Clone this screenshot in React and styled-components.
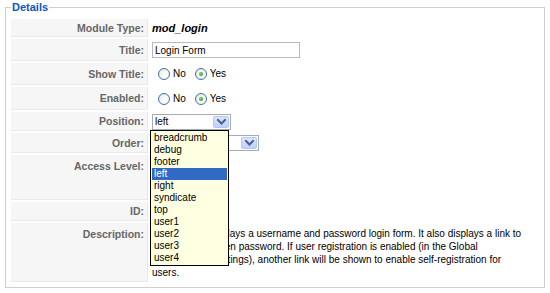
import React from 'react';
import styled, { createGlobalStyle } from 'styled-components';

const Global = createGlobalStyle`
  html, body { margin: 0; padding: 0; background: #fff; }
  body { font-family: "Liberation Sans", Arial, sans-serif; font-size: 10px; color: #000; }
`;

const Fieldset = styled.fieldset`
  margin: 0 5px;
  padding: 5px 5px 5px 5px;
  border: 1px solid #cfcfcf;
  min-width: 0;
`;

const Legend = styled.legend`
  padding: 0 1px;
  font: bold 11px/14px "Liberation Sans", Arial, sans-serif;
  color: #0b55c4;
`;

const Rows = styled.div`
  display: flex;
  flex-direction: column;
  gap: 2px;
`;

const Row = styled.div`
  display: grid;
  grid-template-columns: 137px 1fr;
  column-gap: 2px;
  height: ${p => p.$h}px;
`;

const Key = styled.div`
  box-sizing: border-box;
  background: #f6f6f6;
  border-bottom: 1px solid #e9e9e9;
  border-right: 1px solid #e9e9e9;
  color: #666;
  font: bold 10.5px/12px "Liberation Sans", Arial, sans-serif;
  display: flex;
  justify-content: flex-end;
  align-items: ${p => (p.$top ? 'flex-start' : 'center')};
  padding: ${p => (p.$top ? '5px' : '0')} 3px 0 0;
`;

const Value = styled.div`
  position: relative;
  display: flex;
  align-items: ${p => (p.$top ? 'flex-start' : 'center')};
  padding-left: 2px;
  min-width: 0;
`;

const ModType = styled.span`
  font: italic bold 11px/13px "Liberation Sans", Arial, sans-serif;
  color: #000;
`;

const TextInput = styled.input`
  box-sizing: border-box;
  width: 148px;
  height: 16px;
  margin: 0;
  padding: 0 2px;
  border: 1px solid #b9b9b9;
  background: #fff;
  font: 10px "Liberation Sans", Arial, sans-serif;
  color: #000;
  outline: none;
`;

const RadioGroup = styled.div`
  display: flex;
  align-items: center;
  gap: 9px;
  padding-left: 6px;
`;

const RadioOption = styled.label`
  display: inline-flex;
  align-items: center;
  gap: 3px;
  font: 10px/12px "Liberation Sans", Arial, sans-serif;
  color: #000;
`;

const RadioCircle = styled.span`
  box-sizing: border-box;
  width: 12px;
  height: 12px;
  border-radius: 50%;
  border: 1px solid #4470a3;
  background: radial-gradient(circle at 65% 65%, #ffffff 0%, #f6f6f3 45%, #dcdcd7 100%);
  display: inline-flex;
  align-items: center;
  justify-content: center;
  &::after {
    content: '';
    width: 4px;
    height: 4px;
    border-radius: 50%;
    background: ${p => (p.$checked ? 'radial-gradient(circle at 40% 40%, #7ee07e, #21a121 70%)' : 'transparent')};
  }
`;

const SelectBox = styled.div`
  box-sizing: border-box;
  width: ${p => p.$w}px;
  height: 16px;
  border: 1px solid #a5acb2;
  background: #fff;
  display: flex;
  align-items: stretch;
  padding: 1px;
`;

const SelectText = styled.span`
  flex: 1;
  padding-left: 1px;
  font: 10px/12px "Liberation Sans", Arial, sans-serif;
  color: #000;
  white-space: nowrap;
  overflow: hidden;
`;

const ArrowButton = styled.span`
  box-sizing: border-box;
  width: 16px;
  border: 1px solid #b3c8f5;
  border-radius: 2px;
  background: linear-gradient(#dbe6fe, #bcd0fa);
  display: flex;
  align-items: center;
  justify-content: center;
`;

const DropList = styled.ul`
  position: absolute;
  z-index: 10;
  top: calc(50% + 8px);
  left: 0;
  box-sizing: border-box;
  width: 79px;
  margin: 0;
  padding: 1px;
  list-style: none;
  border: 1px solid #000;
  background: #ffffe1;
`;

const DropItem = styled.li`
  height: 12px;
  padding-left: 2px;
  font: 10px/12px "Liberation Sans", Arial, sans-serif;
  color: ${p => (p.$sel ? '#fff' : '#000')};
  background: ${p => (p.$sel ? '#316ac5' : 'transparent')};
  white-space: nowrap;
`;

const ListBox = styled.div`
  box-sizing: border-box;
  width: 76px;
  height: 40px;
  margin-top: 3px;
  border: 1px solid #a5acb2;
  background: #fff;
  font: 10px/12px "Liberation Sans", Arial, sans-serif;
  padding: 1px 2px;
`;

const Desc = styled.p`
  margin: 0;
  padding-top: 4px;
  max-width: 378px;
  font: 10px/13px "Liberation Sans", Arial, sans-serif;
  color: #000;
`;

const Chevron = () => (
  <svg width="11" height="8" viewBox="0 0 11 8">
    <polyline points="2,2 5.5,5.5 9,2" fill="none" stroke="#4d6185" strokeWidth="2" strokeLinecap="square" />
  </svg>
);

const Select = ({ w, value }) => (
  <SelectBox $w={w}>
    <SelectText>{value}</SelectText>
    <ArrowButton>
      <Chevron />
    </ArrowButton>
  </SelectBox>
);

const Radios = ({ checked }) => (
  <RadioGroup>
    <RadioOption>
      <RadioCircle $checked={checked === 'no'} />
      No
    </RadioOption>
    <RadioOption>
      <RadioCircle $checked={checked === 'yes'} />
      Yes
    </RadioOption>
  </RadioGroup>
);

const positions = ['breadcrumb', 'debug', 'footer', 'left', 'right', 'syndicate', 'top', 'user1', 'user2', 'user3', 'user4'];

export default function App() {
  return (
    <>
      <Global />
      <Fieldset>
        <Legend>Details</Legend>
        <Rows>
          <Row $h={18}>
            <Key>Module Type:</Key>
            <Value>
              <ModType>mod_login</ModType>
            </Value>
          </Row>
          <Row $h={22}>
            <Key>Title:</Key>
            <Value>
              <TextInput defaultValue="Login Form" />
            </Value>
          </Row>
          <Row $h={22}>
            <Key>Show Title:</Key>
            <Value>
              <Radios checked="yes" />
            </Value>
          </Row>
          <Row $h={23}>
            <Key>Enabled:</Key>
            <Value>
              <Radios checked="yes" />
            </Value>
          </Row>
          <Row $h={19}>
            <Key>Position:</Key>
            <Value>
              <Select w={79} value="left" />
              <DropList>
                {positions.map(p => (
                  <DropItem key={p} $sel={p === 'left'}>
                    {p}
                  </DropItem>
                ))}
              </DropList>
            </Value>
          </Row>
          <Row $h={20}>
            <Key>Order:</Key>
            <Value>
              <Select w={107} value="1::Login Form" />
            </Value>
          </Row>
          <Row $h={45}>
            <Key $top>Access Level:</Key>
            <Value $top>
              <ListBox>Public</ListBox>
            </Value>
          </Row>
          <Row $h={19}>
            <Key>ID:</Key>
            <Value />
          </Row>
          <Row $h={59}>
            <Key $top>Description:</Key>
            <Value $top>
              <Desc>
                This Module displays a username and password login form. It also displays a link to retrieve a
                forgotten password. If user registration is enabled (in the Global Configuration settings), another
                link will be shown to enable self-registration for users.
              </Desc>
            </Value>
          </Row>
        </Rows>
      </Fieldset>
    </>
  );
}
